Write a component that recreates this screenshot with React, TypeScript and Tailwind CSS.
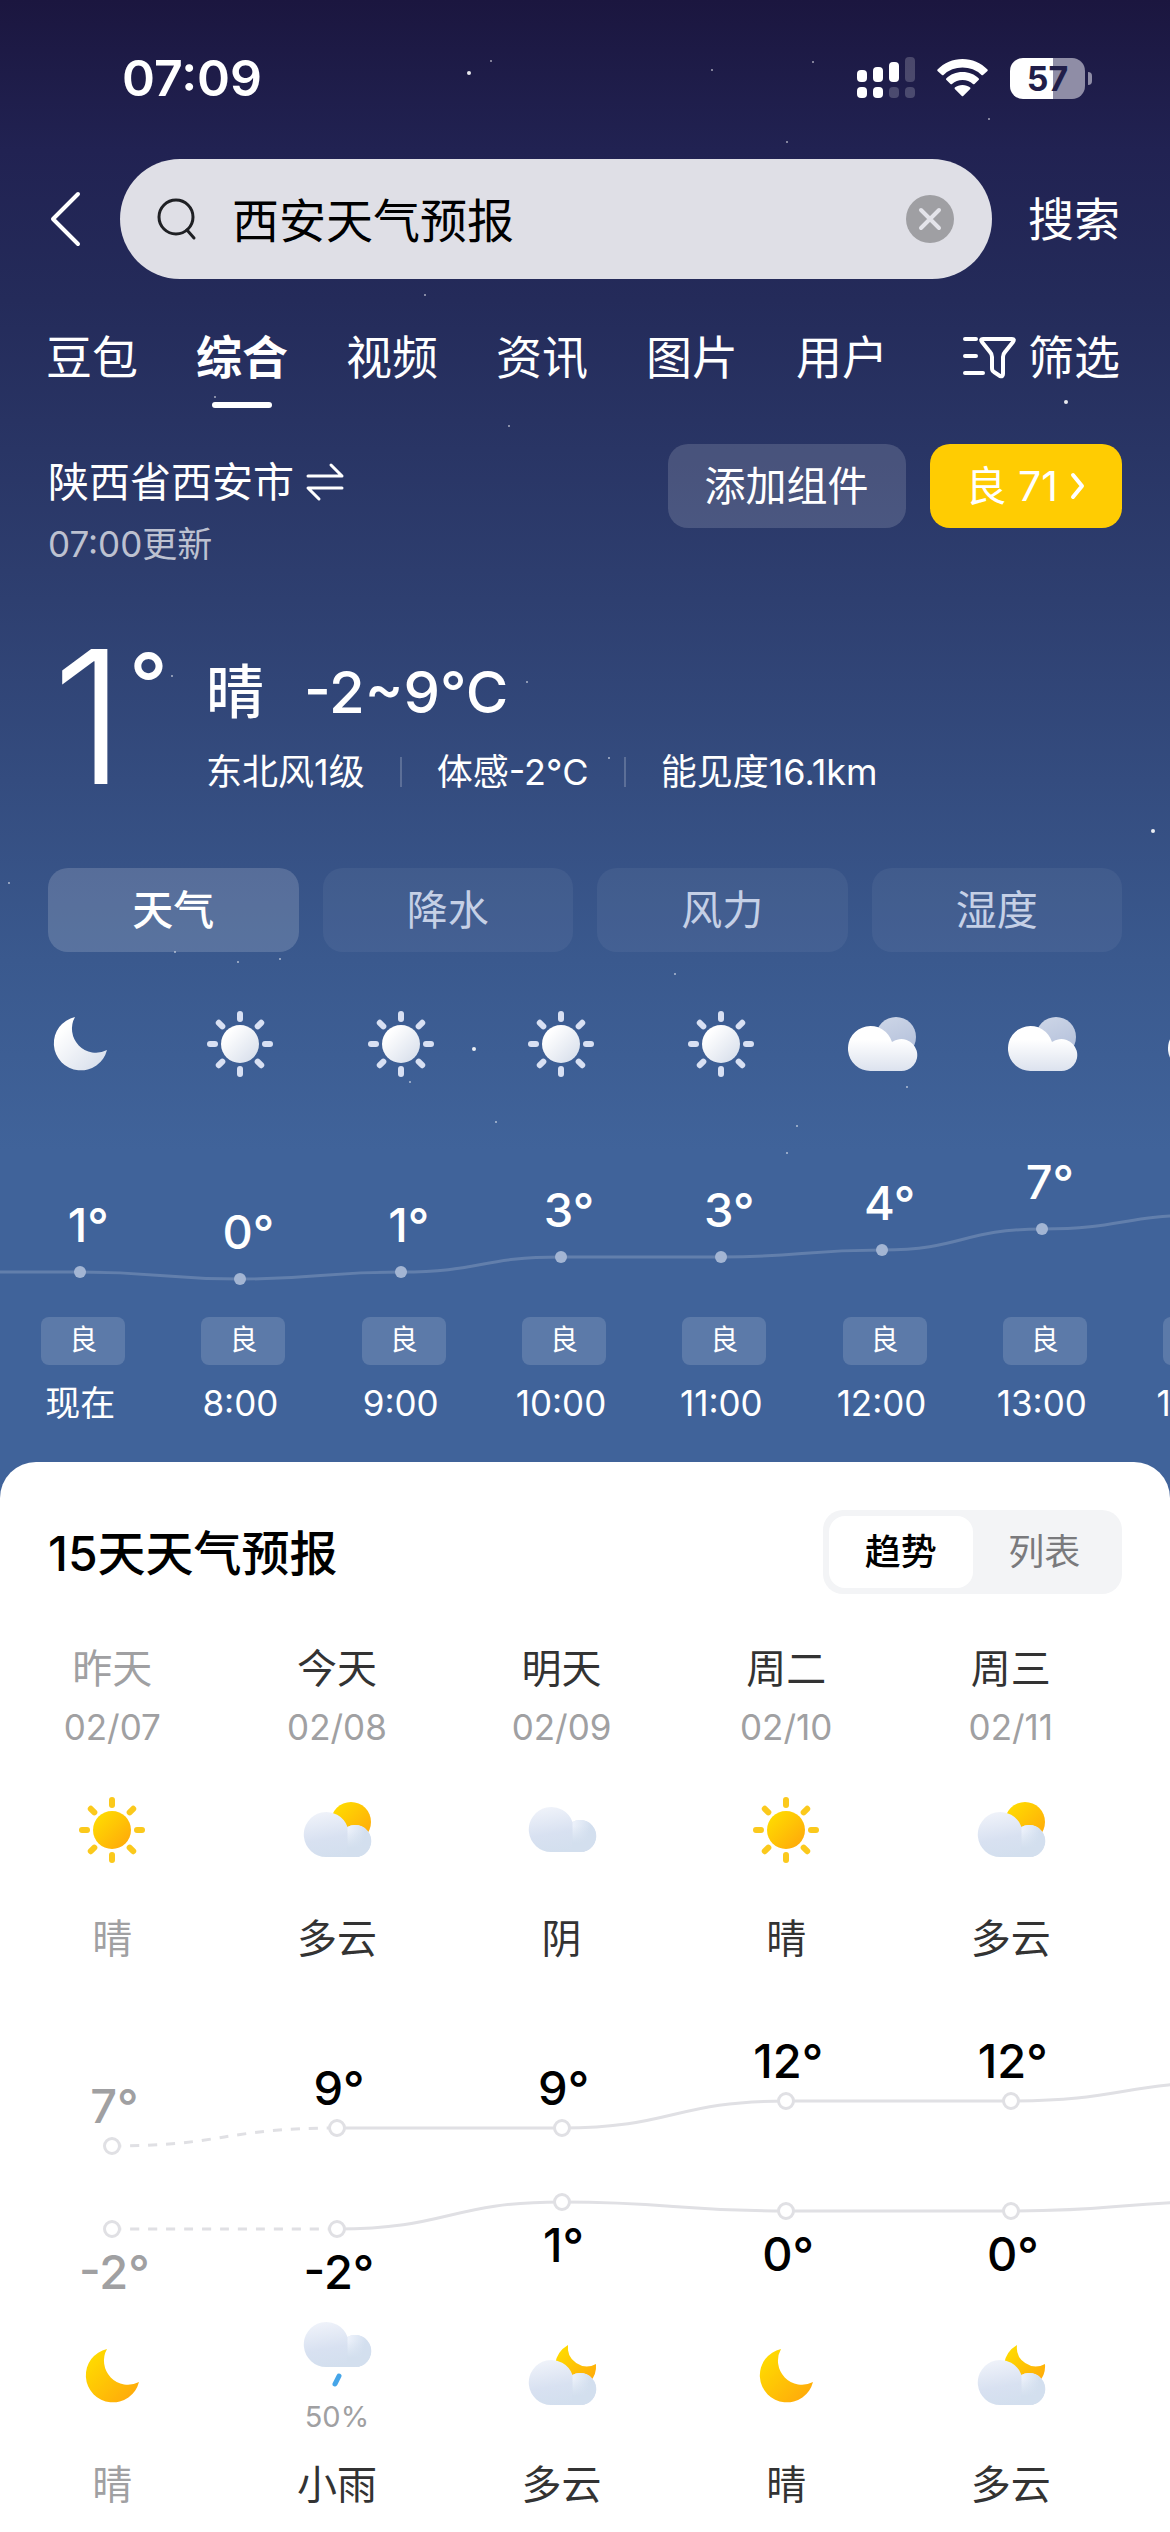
import React, { useId, useState } from "react";

type HourIcon = "moon" | "sun" | "cloud";
type DayIcon = "sun" | "partly" | "cloud" | "moon" | "moonCloud" | "rain";

const stars: [number, number, number][] = [
  [491, 61, 1], [469, 73, 2], [712, 70, 1], [813, 62, 1], [989, 119, 1], [787, 142, 1],
  [425, 295, 1], [1066, 402, 2], [509, 426, 1], [215, 397, 1], [172, 676, 1], [527, 682, 1],
  [609, 758, 1], [1153, 831, 2], [9, 883, 1], [175, 952, 1], [238, 962, 1], [280, 959, 1],
  [675, 974, 1], [474, 1049, 2], [410, 1082, 1], [496, 1122, 1], [907, 1087, 1],
  [797, 1126, 1], [787, 1153, 1],
];

const hours: { time: string; temp: number; icon: HourIcon; y: number }[] = [
  { time: "现在", temp: 1, icon: "moon", y: 192 },
  { time: "8:00", temp: 0, icon: "sun", y: 199 },
  { time: "9:00", temp: 1, icon: "sun", y: 192 },
  { time: "10:00", temp: 3, icon: "sun", y: 177 },
  { time: "11:00", temp: 3, icon: "sun", y: 177 },
  { time: "12:00", temp: 4, icon: "cloud", y: 170 },
  { time: "13:00", temp: 7, icon: "cloud", y: 149 },
  { time: "14:00", temp: 9, icon: "cloud", y: 135 },
];

const days: {
  name: string; date: string; day: DayIcon; dayText: string; high: number; highY: number;
  low: number; lowY: number; night: DayIcon; nightText: string; rain?: string; past?: boolean;
}[] = [
  { name: "昨天", date: "02/07", day: "sun", dayText: "晴", high: 7, highY: 179, low: -2, lowY: 262, night: "moon", nightText: "晴", past: true },
  { name: "今天", date: "02/08", day: "partly", dayText: "多云", high: 9, highY: 161, low: -2, lowY: 262, night: "rain", nightText: "小雨", rain: "50%" },
  { name: "明天", date: "02/09", day: "cloud", dayText: "阴", high: 9, highY: 161, low: 1, lowY: 235, night: "moonCloud", nightText: "多云" },
  { name: "周二", date: "02/10", day: "sun", dayText: "晴", high: 12, highY: 134, low: 0, lowY: 244, night: "moon", nightText: "晴" },
  { name: "周三", date: "02/11", day: "partly", dayText: "多云", high: 12, highY: 134, low: 0, lowY: 244, night: "moonCloud", nightText: "多云" },
];

/* Smooth line through equally spaced points, flat at every point. */
function curve(ys: number[], step: number, first: number, from = 0) {
  let d = "";
  ys.forEach((y, i) => {
    const x = first + (from + i) * step;
    if (i === 0) d += `M${x} ${y}`;
    else {
      const mid = x - step / 2;
      d += ` C${mid} ${ys[i - 1]} ${mid} ${y} ${x} ${y}`;
    }
  });
  return d;
}

const rays = [0, 45, 90, 135, 180, 225, 270, 315];
const MOON = "M-5 -27 A27 27 0 1 0 27 6 A24 24 0 0 1 -5 -27 Z";

function HourGlyph({ kind }: { kind: HourIcon }) {
  const id = useId();
  return (
    <svg className="size-[72px]" viewBox="-36 -36 72 72" aria-hidden="true">
      <defs>
        <linearGradient id={id + "a"} x1="0" y1="0" x2="1" y2="1">
          <stop offset="0.2" stopColor="#ffffff" />
          <stop offset="1" stopColor="#d3dbe9" />
        </linearGradient>
        <linearGradient id={id + "b"} x1="0" y1="0" x2="0" y2="1">
          <stop offset="0.3" stopColor="#ffffff" />
          <stop offset="1" stopColor="#dce2ee" />
        </linearGradient>
        <linearGradient id={id + "e"} x1="0.3" y1="0" x2="0.7" y2="1">
          <stop offset="0" stopColor="#cbd4e6" />
          <stop offset="1" stopColor="#b2bfda" />
        </linearGradient>
      </defs>
      {kind === "moon" && <path d={MOON} fill={`url(#${id}a)`} />}
      {kind === "sun" && (
        <>
          <circle r="19" fill={`url(#${id}a)`} />
          {rays.map((r) => (
            <line key={r} y1="-30" y2="-25" stroke="#d8e0f3" strokeWidth="6" strokeLinecap="round" transform={`rotate(${r})`} />
          ))}
        </>
      )}
      {kind === "cloud" && (
        <>
          <circle cx="14" cy="-7" r="20" fill={`url(#${id}e)`} />
          <path d="M-11.500 27 A22.500 22.500 0 1 1 10 -2 A16 16 0 1 1 18 27 Z" fill={`url(#${id}b)`} />
        </>
      )}
    </svg>
  );
}

function CloudShape({ id, dy }: { id: string; dy: number }) {
  return (
    <g transform={`translate(0 ${dy})`}>
      <path d="M-11 22 A22.500 22.500 0 1 1 10.500 -8 A16 16 0 1 1 18 22 Z" fill={`url(#${id}c)`} />
      <path d="M10.500 -8.100 A16 16 0 1 1 18 22 L10.500 22 Z" fill={`url(#${id}d)`} />
      <path d="M10 -8 A16 16 0 1 1 18 22 L10 22 Z" fill={`url(#${id}f)`} />
    </g>
  );
}

function DayGlyph({ kind }: { kind: DayIcon }) {
  const id = useId();
  return (
    <svg className="size-[72px]" viewBox="-36 -36 72 72" aria-hidden="true">
      <defs>
        <linearGradient id={id + "s"} x1="0" y1="0" x2="1" y2="1">
          <stop offset="0.1" stopColor="#ffdc00" />
          <stop offset="1" stopColor="#ffa40c" />
        </linearGradient>
        <linearGradient id={id + "c"} gradientUnits="userSpaceOnUse" x1="-14" y1="-24" x2="-6" y2="22">
          <stop offset="0" stopColor="#f0f3fa" />
          <stop offset="0.6" stopColor="#d8e1f1" />
          <stop offset="1" stopColor="#d3dfee" />
        </linearGradient>
        <linearGradient id={id + "d"} gradientUnits="userSpaceOnUse" x1="10" y1="0" x2="27" y2="4">
          <stop offset="0" stopColor="#ecf1fa" />
          <stop offset="1" stopColor="#d3dfef" />
        </linearGradient>
        <linearGradient id={id + "f"} gradientUnits="userSpaceOnUse" x1="0" y1="-4" x2="0" y2="13">
          <stop offset="0" stopColor="#d3dfee" stopOpacity="0" />
          <stop offset="1" stopColor="#d3dfee" />
        </linearGradient>
      </defs>
      {kind === "sun" && (
        <>
          <circle r="19" fill={`url(#${id}s)`} />
          {rays.map((r) => (
            <line key={r} y1="-30" y2="-25" stroke="#fbc91c" strokeWidth="6" strokeLinecap="round" transform={`rotate(${r})`} />
          ))}
        </>
      )}
      {kind === "partly" && (
        <>
          <circle cx="14" cy="-8" r="20" fill={`url(#${id}s)`} />
          <CloudShape id={id} dy={5} />
        </>
      )}
      {kind === "cloud" && <CloudShape id={id} dy={0} />}
      {kind === "moon" && <path d={MOON} fill={`url(#${id}s)`} />}
      {kind === "moonCloud" && (
        <>
          <path d="M6 -31 A27 27 0 0 0 -7 -12 L8 10 L28 6 A24 24 0 0 0 34 -12 A19 19 0 0 1 6 -31 Z" fill={`url(#${id}s)`} />
          <CloudShape id={id} dy={7} />
        </>
      )}
      {kind === "rain" && (
        <>
          <CloudShape id={id} dy={-11} />
          <line x1="2" y1="20" x2="-2" y2="28" stroke="#45a5e8" strokeWidth="5" strokeLinecap="round" />
        </>
      )}
    </svg>
  );
}

function StatusBar() {
  return (
    <div className="flex h-[60px] items-center justify-between pr-[78px] pl-[122px]">
      <span className="text-[50px] leading-[60px] font-semibold">07:09</span>
      <div className="flex items-center gap-[22px]">
        <svg className="h-[42px] w-[58px]" viewBox="0 0 58 42" fill="#fff" aria-label="信号">
          <rect x="0" y="13" width="10" height="12" rx="4" />
          <rect x="16" y="10" width="10" height="15" rx="4" />
          <rect x="32" y="5" width="10" height="20" rx="4" />
          <rect x="48" y="0" width="10" height="25" rx="4" opacity="0.2" />
          <rect x="0" y="30" width="10" height="11" rx="4" />
          <rect x="16" y="30" width="10" height="11" rx="4" />
          <rect x="32" y="30" width="10" height="11" rx="4" opacity="0.2" />
          <rect x="48" y="30" width="10" height="11" rx="4" opacity="0.2" />
        </svg>
        <svg className="h-[38px] w-[51px]" viewBox="0 0 51 38" fill="#fff" aria-label="无线网络">
          <path d="M25.500 0 C35 0 44 4 50.500 10.500 Q51 11.300 50.500 12 L46 16 Q45 16.500 44.500 16 A27.500 27.500 0 0 0 6.500 16 Q6 16.500 5 16 L.500 12 Q0 11.300 .500 10.500 C7 4 16 0 25.500 0 Z" />
          <path d="M25.500 13 C32 13 37.500 15.300 41.800 19.400 Q42.300 20 41.800 20.700 L37.500 25 Q36.500 25.500 36 25 A15.500 15.500 0 0 0 15 25 Q14.500 25.500 13.500 25 L9.200 20.700 Q8.700 20 9.200 19.400 C13.500 15.300 19 13 25.500 13 Z" />
          <path d="M25.500 26 C28.500 26 31 27 33.200 28.600 Q33.700 29.300 33.200 30 L26.200 37 Q25.500 37.500 24.800 37 L17.800 30 Q17.300 29.300 17.800 28.600 C20 27 22.500 26 25.500 26 Z" />
        </svg>
        <div className="flex items-center gap-[3px]">
          <div className="flex h-[41px] w-[75px] items-center justify-center rounded-[13px] bg-[linear-gradient(90deg,#fff_57%,#8f8da6_57%)] text-[34px] leading-[41px] font-bold text-[#211e49]">57</div>
          <span className="h-[13px] w-1 rounded-r-full bg-[#8f8da6]" />
        </div>
      </div>
    </div>
  );
}

function SearchRow() {
  const [query, setQuery] = useState("西安天气预报");
  return (
    <form className="mt-[51px] flex items-center pr-[50px] pl-12" onSubmit={(e) => e.preventDefault()}>
      <button type="button" aria-label="返回" className="w-[72px] shrink-0">
        <svg className="h-[56px] w-[36px]" viewBox="0 0 36 56" fill="none" stroke="#fff" strokeWidth="4" strokeLinecap="round" strokeLinejoin="round">
          <path d="M30 3 L5 28 L30 53" />
        </svg>
      </button>
      <label className="flex h-[120px] min-w-0 flex-1 items-center rounded-full bg-[#dfdfe6] pr-[38px] pl-9">
        <svg className="size-[44px] shrink-0" viewBox="0 0 44 44" fill="none" stroke="#1f2024" strokeWidth="3" strokeLinecap="round" aria-hidden="true">
          <circle cx="20" cy="20" r="17" />
          <path d="M31 33 L38 41" />
        </svg>
        <input
          aria-label="搜索内容"
          value={query}
          onChange={(e) => setQuery(e.target.value)}
          className="ml-8 h-[72px] min-w-0 flex-1 bg-transparent pb-1 text-[47px] text-black outline-none"
        />
        <button type="button" aria-label="清除" onClick={() => setQuery("")} className="flex size-12 shrink-0 items-center justify-center rounded-full bg-[#9f9fa3]">
          <svg className="size-6" viewBox="0 0 24 24" stroke="#e4e4ea" strokeWidth="4" strokeLinecap="round">
            <path d="M3 3 L21 21 M21 3 L3 21" />
          </svg>
        </button>
      </label>
      <button type="submit" className="ml-9 shrink-0 text-[46px] leading-[60px]">搜索</button>
    </form>
  );
}

function NavTabs() {
  const tabs = ["豆包", "综合", "视频", "资讯", "图片", "用户"];
  return (
    <nav className="mt-12 flex items-start justify-between pr-[50px] pl-[46px]">
      <div className="flex gap-[58px]">
        {tabs.map((t) => (
          <a key={t} href={"#" + t} className="flex flex-col items-center">
            <span className={t === "综合" ? "text-[46px] leading-[60px] font-bold" : "text-[46px] leading-[60px]"}>{t}</span>
            {t === "综合" && <span className="mt-[15px] h-[6px] w-[60px] rounded-full bg-white" />}
          </a>
        ))}
      </div>
      <button className="flex items-center gap-3 text-[46px] leading-[60px]">
        <svg className="h-[44px] w-[54px]" viewBox="0 0 54 44" fill="none" stroke="#fff" strokeWidth="4" strokeLinecap="round" strokeLinejoin="round" aria-hidden="true">
          <path d="M3 4 H14 M3 21 H14 M3 38 H21" />
          <path d="M21 4 H50 Q53 4 51 7 L43 17 Q41 19 41 22 V39 Q41 42 38 41 L32 37 Q30 36 30 33 V22 Q30 19 28 17 L20 7 Q18 4 21 4 Z" />
        </svg>
        筛选
      </button>
    </nav>
  );
}

function LocationRow() {
  return (
    <div className="mt-9 flex items-start px-12">
      <div className="flex-1">
        <button className="flex h-[76px] items-center gap-3 text-[41px] leading-[76px]">
          陕西省西安市
          <svg className="h-[40px] w-[38px]" viewBox="0 0 38 40" fill="none" stroke="#fff" strokeWidth="3" strokeLinecap="round" strokeLinejoin="round" aria-hidden="true">
            <path d="M2 14 H36 L25 3" />
            <path d="M36 26 H2 L13 37" />
          </svg>
        </button>
        <p className="text-[35px] leading-[48px] text-white/70">07:00更新</p>
      </div>
      <button className="h-[84px] rounded-[20px] bg-white/15 px-[37px] text-[41px] leading-[84px]">添加组件</button>
      <button className="ml-6 flex h-[84px] items-center rounded-[20px] bg-[#ffcc02] px-9 text-[41px] leading-[84px]">
        良 71
        <svg className="ml-3 h-[32px] w-[16px]" viewBox="0 0 16 32" fill="none" stroke="#fff" strokeWidth="4" strokeLinecap="round" strokeLinejoin="round" aria-hidden="true">
          <path d="M3 5 L12 16 L3 27" />
        </svg>
      </button>
    </div>
  );
}

function Current() {
  return (
    <div className="mt-14 flex items-start pl-[52px]">
      <div className="flex w-[154px] items-start gap-1">
        <span className="text-[186px] leading-[186px] font-light">1</span>
        <span className="text-[84px] leading-[120px] font-medium">°</span>
      </div>
      <div className="pt-7">
        <p className="flex gap-10 text-[58px] leading-[80px] font-medium">
          <span>晴</span>
          <span>-2~9°C</span>
        </p>
        <p className="mt-4 flex items-center text-[36px] leading-[48px]">
          <span>东北风1级</span>
          <span className="mx-[35px] h-[30px] w-[2px] bg-white/20" />
          <span>体感-2°C</span>
          <span className="mx-[35px] h-[30px] w-[2px] bg-white/20" />
          <span>能见度16.1km</span>
        </p>
      </div>
    </div>
  );
}

function MetricTabs() {
  const [active, setActive] = useState("天气");
  return (
    <div className="mt-[58px] grid grid-cols-4 gap-6 px-12">
      {["天气", "降水", "风力", "湿度"].map((t) => (
        <button
          key={t}
          onClick={() => setActive(t)}
          className={
            t === active
              ? "h-[84px] rounded-[20px] bg-white/16 text-[41px] leading-[84px] font-medium"
              : "h-[84px] rounded-[20px] bg-white/5 text-[41px] leading-[84px] text-[#c5d0e6]"
          }
        >
          {t}
        </button>
      ))}
    </div>
  );
}

function Hourly() {
  const ys = [192, ...hours.map((h) => h.y)];
  return (
    <section aria-label="逐小时预报" className="relative mt-14 overflow-hidden pb-[35px]">
      <svg className="absolute top-[72px] left-0 h-[220px] w-full" viewBox="0 0 1170 220" preserveAspectRatio="none" fill="none" aria-hidden="true">
        <path d={curve(ys, 160.4, 80, -1)} stroke="#fff" strokeOpacity="0.18" strokeWidth="3" />
      </svg>
      <div className="relative flex">
        {hours.map((h) => (
          <div key={h.time} className="flex w-[13.7%] shrink-0 flex-col items-center">
            <HourGlyph kind={h.icon} />
            <div className="flex h-[220px] flex-col items-center" style={{ paddingTop: h.y - 75 }}>
              <span className="pl-4 text-[47px] leading-[56px] font-medium">{h.temp}°</span>
              <span className="mt-[13px] size-3 rounded-full bg-[#a3b5d3]" />
            </div>
            <span className="mt-[17px] ml-[6px] h-12 w-[84px] rounded-lg bg-white/15 text-center text-[28px] leading-[46px]">良</span>
            <span className="mt-[14px] text-[35px] leading-[48px]">{h.time}</span>
          </div>
        ))}
      </div>
    </section>
  );
}

function Daily() {
  const [view, setView] = useState("趋势");
  const highs = [...days.slice(1).map((d) => d.highY), 115];
  const lows = [...days.slice(1).map((d) => d.lowY), 234];
  return (
    <section aria-label="15天天气预报" className="relative flex-1 overflow-hidden rounded-t-[36px] bg-white pt-12 pb-4 text-[#333]">
      <div className="flex items-center justify-between px-12">
        <h2 className="pt-1 text-[48px] leading-[60px] font-medium text-black">15天天气预报</h2>
        <div className="flex h-[84px] w-[299px] rounded-[20px] bg-[#f3f4f6] p-[6px]">
          {["趋势", "列表"].map((t) => (
            <button
              key={t}
              onClick={() => setView(t)}
              className={
                t === view
                  ? "flex-1 rounded-2xl bg-white text-[36px] leading-[72px] font-medium text-black"
                  : "flex-1 text-[36px] leading-[72px] text-[#7a7a7d]"
              }
            >
              {t}
            </button>
          ))}
        </div>
      </div>
      <div className="relative mt-[47px]">
        <svg className="absolute top-[326px] left-0 h-[353px] w-full" viewBox="0 0 1170 353" preserveAspectRatio="none" fill="none" stroke="#e0e0e4" strokeWidth="3" aria-hidden="true">
          <path d={curve([179, 161], 224.6, 112, 0)} strokeDasharray="9 9" strokeDashoffset="-18" />
          <path d={curve([262, 262], 224.6, 112, 0)} strokeDasharray="9 9" strokeDashoffset="-18" />
          <path d={curve(highs, 224.6, 112, 1)} />
          <path d={curve(lows, 224.6, 112, 1)} />
        </svg>
        <div className="relative flex">
          {days.map((d) => (
            <div key={d.date} className={d.past ? "flex w-[19.2%] shrink-0 flex-col items-center text-[#a0a0a2]" : "flex w-[19.2%] shrink-0 flex-col items-center"}>
              <span className="text-[40px] leading-[56px]">{d.name}</span>
              <span className="mt-[6px] text-[35px] leading-[48px] text-[#a0a0a2]">{d.date}</span>
              <div className="mt-[43px]"><DayGlyph kind={d.day} /></div>
              <span className="mt-[45px] text-[40px] leading-[56px]">{d.dayText}</span>
              <div
                className={d.past ? "flex h-[353px] flex-col items-center text-[47px] leading-[56px] font-medium" : "flex h-[353px] flex-col items-center text-[47px] leading-[56px] font-medium text-black"}
                style={{ paddingTop: d.highY - 68 }}
              >
                <span className="pl-1">{d.high}°</span>
                <span className="mt-[2px] flex h-5 items-center">
                  <span className="size-[18px] rounded-full border-[3px] border-[#e0e0e4] bg-white" />
                </span>
                <span className="flex h-5 items-center" style={{ marginTop: d.lowY - d.highY - 20 }}>
                  <span className="size-[18px] rounded-full border-[3px] border-[#e0e0e4] bg-white" />
                </span>
                <span className="mt-[5px] pl-1">{d.low}°</span>
              </div>
              <div className={d.rain ? "flex h-[137px] flex-col items-center" : "flex h-[137px] flex-col items-center pt-5"}>
                <DayGlyph kind={d.night} />
                {d.rain && <span className="mt-[7px] text-[29px] leading-[36px] text-[#a0a0a2]">{d.rain}</span>}
              </div>
              <span className="text-[40px] leading-[56px]">{d.nightText}</span>
            </div>
          ))}
        </div>
      </div>
    </section>
  );
}

export default function App() {
  return (
    <main className="relative flex min-h-screen flex-col overflow-hidden bg-[linear-gradient(180deg,#1b163f_0px,#212252_150px,#242b5a_300px,#2e3f70_600px,#3a598e_960px,#40639a_1150px)] font-['Inter','Noto_Sans_CJK_SC',sans-serif] text-white">
      <svg className="pointer-events-none absolute top-0 left-0 h-[1200px] w-full" viewBox="0 0 1170 1200" preserveAspectRatio="none" fill="#fff" aria-hidden="true">
        {stars.map(([x, y, r]) => (
          <circle key={`${x}-${y}`} cx={x} cy={y} r={r} opacity={r === 2 ? 0.9 : 0.6} />
        ))}
      </svg>
      <header className="relative pt-12">
        <StatusBar />
        <SearchRow />
        <NavTabs />
      </header>
      <section aria-label="当前天气" className="relative">
        <LocationRow />
        <Current />
        <MetricTabs />
      </section>
      <Hourly />
      <Daily />
    </main>
  );
}
